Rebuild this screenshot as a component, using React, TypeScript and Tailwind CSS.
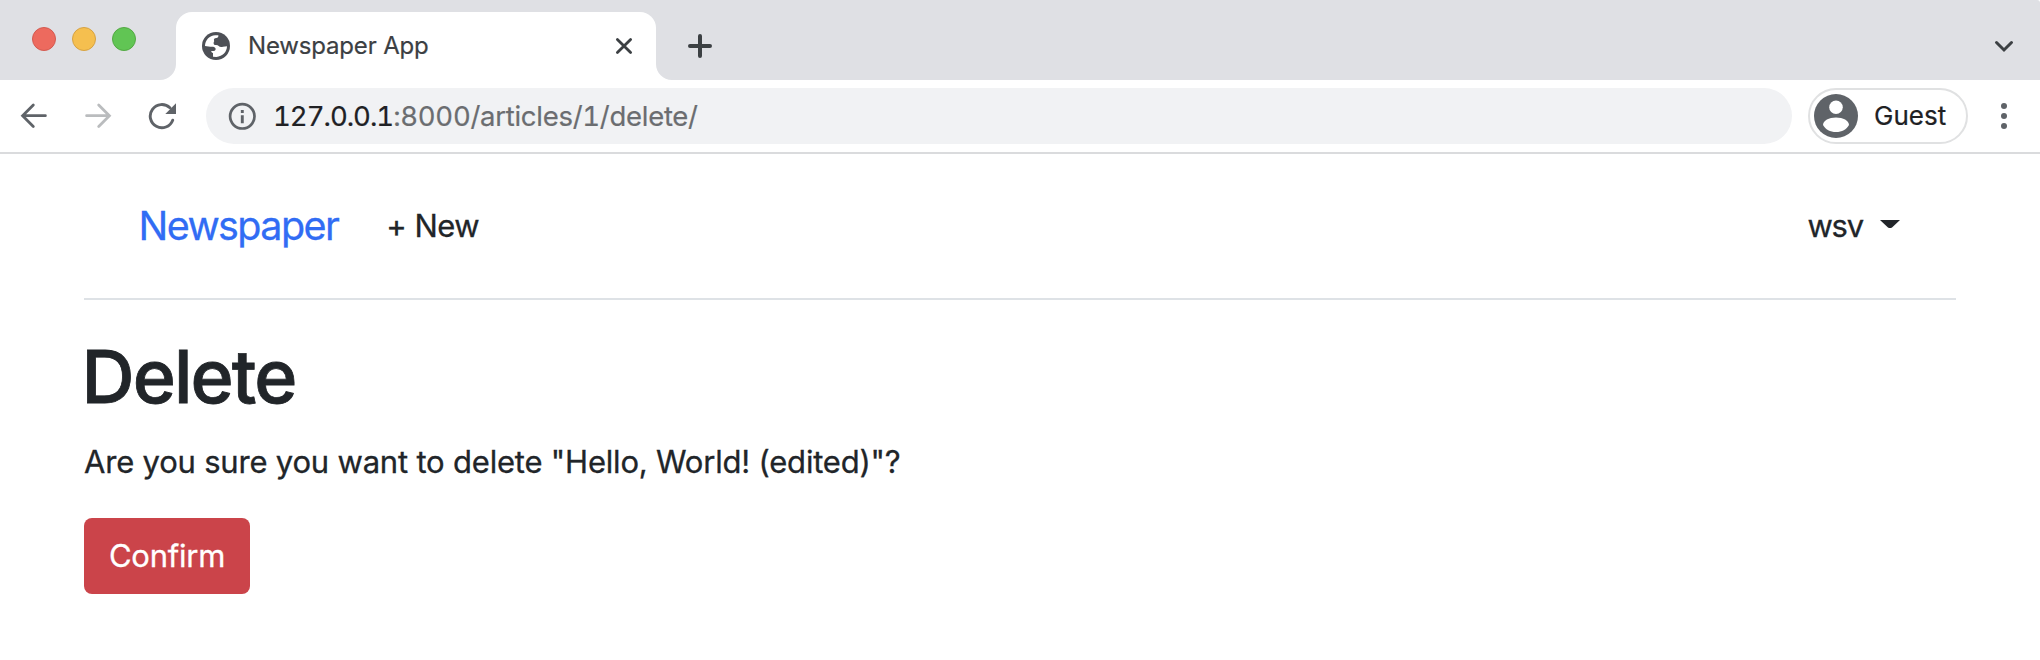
function TrafficLights() {
  return (
    <div className="mt-[27px] ml-8 flex gap-4">
      <span className="size-6 rounded-full border border-[#d35a50] bg-[#ed6a5e]" />
      <span className="size-6 rounded-full border border-[#d6a243] bg-[#f5bf4f]" />
      <span className="size-6 rounded-full border border-[#53a943] bg-[#61c554]" />
    </div>
  );
}

function GlobeIcon() {
  return (
    <svg className="size-7 shrink-0" viewBox="0 0 84 84">
      <circle cx="42" cy="42" r="42" fill="#4d5056" />
      <path
        fill="#fff"
        d="M9 42C9 25 22 10 40 9.500L49 10C50 14 48 18 43 18C37 18 35 22 36 25C38 30 34 29 35 35C36 41 45 37 49 41C53 45 57 46 63 44L75 43C75 59 62 74 43 75L33 74L33 63C30 62 27 61 28 57C33 57 41 58 41 51C41 45 35 44 30 44L25 44Z"
      />
    </svg>
  );
}

function Flare({ side }: { side: "left" | "right" }) {
  return (
    <svg className="size-4 shrink-0 self-end" viewBox="0 0 16 16">
      <path
        fill="#fff"
        d={side === "left" ? "M16 0V16H0C8.800 16 16 8.800 16 0Z" : "M0 0V16H16C7.200 16 0 8.800 0 0Z"}
      />
    </svg>
  );
}

function TabStrip() {
  return (
    <div className="flex h-20 rounded-tr-[3px] bg-[#dfe0e4]">
      <div className="w-40 shrink-0">
        <TrafficLights />
      </div>
      <Flare side="left" />
      <div className="mt-3 flex h-[68px] w-[480px] shrink-0 items-start rounded-t-2xl bg-white pt-5 pl-[26px]">
        <GlobeIcon />
        <span className="ml-[18px] h-7 text-[24px] leading-7 tracking-[-0.17px] whitespace-nowrap text-[#3c4043] [-webkit-text-stroke:0.2px]">
          Newspaper App
        </span>
        <svg className="mt-[4px] mr-[22px] ml-auto size-5" viewBox="0 0 20 20" fill="none" stroke="#3c4043" strokeWidth="2.800" strokeLinecap="round">
          <path d="M3.400 3.400L16.600 16.600M16.600 3.400L3.400 16.600" />
        </svg>
      </div>
      <Flare side="right" />
      <svg className="mt-[34px] ml-4 size-6" viewBox="0 0 24 24" fill="none" stroke="#3c4043" strokeWidth="4" strokeLinecap="round">
        <path d="M12 2V22M2 12H22" />
      </svg>
      <svg className="mt-[38px] mr-6 ml-auto h-4 w-6" viewBox="0 0 24 16" fill="none" stroke="#3c4043" strokeWidth="3" strokeLinecap="round">
        <path d="M4.500 4.500L12 12L19.500 4.500" />
      </svg>
    </div>
  );
}

function Toolbar() {
  return (
    <div className="flex h-[74px] items-center border-b-2 border-[#dadbdd] bg-white">
      <svg className="ml-5 size-7 shrink-0" viewBox="0 0 28 28" fill="none" stroke="#5f6368" strokeWidth="2.800" strokeLinecap="round">
        <path d="M25.400 13.700H3M13.300 3L2.600 13.700L13.300 24.400" />
      </svg>
      <svg className="ml-9 size-7 shrink-0" viewBox="0 0 28 28" fill="none" stroke="#babcbe" strokeWidth="2.800" strokeLinecap="round">
        <path d="M2.600 13.700H25M14.700 3L25.400 13.700L14.700 24.400" />
      </svg>
      <svg className="ml-9 size-7 shrink-0" viewBox="0 0 28 28" fill="none">
        <path d="M24.700 18.200A11.600 11.600 0 1 1 21.900 5.800" stroke="#5f6368" strokeWidth="2.900" strokeLinecap="round" />
        <path d="M28 1.300V12H17.300Z" fill="#5f6368" />
      </svg>
      <div className="ml-[30px] flex h-14 w-[1586px] shrink-0 items-center rounded-full bg-[#f1f2f4] pl-[22px]">
        <svg className="size-7 shrink-0" viewBox="0 0 28 28" fill="none" stroke="#5f6368">
          <circle cx="14.300" cy="14.300" r="12.200" strokeWidth="2.700" />
          <path d="M14.300 13.200V21.200M14.300 8V11" strokeWidth="2.900" />
        </svg>
        <span className="ml-[17px] text-[27.500px] leading-8 tracking-[-0.280px] whitespace-nowrap text-[#6b6d70] tabular-nums [-webkit-text-stroke:0.2px]">
          <span className="tracking-[-1px] text-[#202124]">127.0.0.1</span>:8000/articles/1/delete/
        </span>
      </div>
      <div className="ml-4 flex h-14 w-40 shrink-0 items-center rounded-full border-2 border-[#e0e1e2] pl-1">
        <svg className="size-11 shrink-0" viewBox="0 0 44 44">
          <circle cx="22" cy="22" r="22" fill="#5f6368" />
          <circle cx="22" cy="13.300" r="6.800" fill="#fff" />
          <path d="M9 31C9 26.500 15 23.500 22 23.500S35 26.500 35 31C32.500 35.500 28 38 22 38S11.500 35.500 9 31Z" fill="#fff" />
        </svg>
        <span className="ml-4 text-[26px] leading-8 text-[#202124] [-webkit-text-stroke:0.2px]">Guest</span>
      </div>
      <svg className="ml-[30px] h-7 w-3 shrink-0" viewBox="0 0 12 28" fill="#5f6368">
        <circle cx="6" cy="4" r="3" />
        <circle cx="6" cy="14" r="3" />
        <circle cx="6" cy="24" r="3" />
      </svg>
    </div>
  );
}

function Page() {
  return (
    <main className="px-[84px] text-[#212529] [-webkit-text-stroke:0.3px]">
      <nav className="flex h-[146px] items-center border-b-2 border-[#dee2e6] pr-14 pl-[54.500px]">
        <a className="text-[39.500px] leading-[60px] tracking-[-1.600px] text-[#316cf4]">Newspaper</a>
        <a className="ml-12 text-[31px] leading-[48px] tracking-[-0.480px]">+ New</a>
        <a className="ml-auto text-[31px] leading-[48px] tracking-[-1.200px]">wsv</a>
        <svg className="-mt-[5px] ml-[17px] h-2 w-5" viewBox="0 0 20 8">
          <path d="M0 0H20L12 7.500Q10 8.500 8 7.500Z" fill="#212529" />
        </svg>
      </nav>
      <h1 className="mt-[29px] -ml-[2.500px] w-fit text-[73.500px] leading-[96px] font-medium tracking-[-1.900px] [-webkit-text-stroke:0.8px]">
        Delete
      </h1>
      <p className="mt-[13px] w-fit text-[31px] leading-[48px] tracking-[-0.200px]">
        Are you sure you want to delete "Hello, World! (edited)"?
      </p>
      <button className="mt-8 flex h-[76px] w-[166px] items-center justify-center rounded-lg bg-[#cb444a] text-[31px] leading-[48px] tracking-[-0.250px] text-white">
        Confirm
      </button>
    </main>
  );
}

export default function App() {
  return (
    <div className="min-h-[660px] w-[2040px] bg-white font-['Inter',sans-serif]">
      <TabStrip />
      <Toolbar />
      <Page />
    </div>
  );
}
